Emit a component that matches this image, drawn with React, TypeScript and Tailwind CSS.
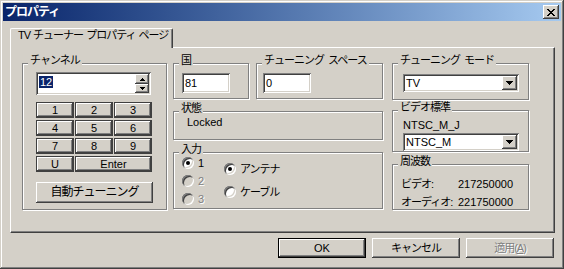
import React from "react";

const raised =
  "bg-[#d4d0c8] shadow-[inset_-1px_-1px_#404040,inset_1px_1px_#fff,inset_-2px_-2px_#808080]";
const sunken =
  "shadow-[inset_1px_1px_#808080,inset_-1px_-1px_#fff,inset_2px_2px_#404040,inset_-2px_-2px_#d4d0c8]";
const jp = "tracking-[-1px] [word-spacing:2px]";
const disabledText = "text-[#808080] [text-shadow:1px_1px_#fff]";

function DownArrow() {
  return (
    <svg width="7" height="4" viewBox="0 0 7 4" shapeRendering="crispEdges">
      <rect x="0" y="0" width="7" height="1" fill="#000" />
      <rect x="1" y="1" width="5" height="1" fill="#000" />
      <rect x="2" y="2" width="3" height="1" fill="#000" />
      <rect x="3" y="3" width="1" height="1" fill="#000" />
    </svg>
  );
}

function SmallArrow({ up }: { up?: boolean }) {
  return (
    <svg width="5" height="3" viewBox="0 0 5 3" shapeRendering="crispEdges">
      {up ? (
        <>
          <rect x="2" y="0" width="1" height="1" fill="#000" />
          <rect x="1" y="1" width="3" height="1" fill="#000" />
          <rect x="0" y="2" width="5" height="1" fill="#000" />
        </>
      ) : (
        <>
          <rect x="0" y="0" width="5" height="1" fill="#000" />
          <rect x="1" y="1" width="3" height="1" fill="#000" />
          <rect x="2" y="2" width="1" height="1" fill="#000" />
        </>
      )}
    </svg>
  );
}

function CloseGlyph() {
  const rows = [
    [0, 1, 6, 7],
    [1, 2, 5, 6],
    [2, 3, 4, 5],
    [3, 4],
    [2, 3, 4, 5],
    [1, 2, 5, 6],
    [0, 1, 6, 7],
  ];
  return (
    <svg width="8" height="7" viewBox="0 0 8 7" shapeRendering="crispEdges">
      {rows.map((xs, y) =>
        xs.map((x) => <rect key={`${x}-${y}`} x={x} y={y} width="1" height="1" fill="#000" />)
      )}
    </svg>
  );
}

function Group({
  label,
  className = "",
  children,
}: {
  label: string;
  className?: string;
  children?: React.ReactNode;
}) {
  return (
    <div
      className={`relative border border-[#808080] shadow-[inset_1px_1px_#fff,1px_1px_#fff] ${className}`}
    >
      <span className={`absolute left-[5px] top-[-10px] bg-[#d4d0c8] px-[2px] ${jp}`}>{label}</span>
      {children}
    </div>
  );
}

function Radio({
  label,
  checked,
  disabled,
  isJp,
}: {
  label: string;
  checked?: boolean;
  disabled?: boolean;
  isJp?: boolean;
}) {
  return (
    <div className="flex h-[18px] items-center">
      <span
        className={`flex h-3 w-3 items-center justify-center rounded-full ${
          disabled ? "bg-[#d4d0c8]" : "bg-white"
        } ${sunken}`}
      >
        {checked && <span className="h-1 w-1 rounded-full bg-black" />}
      </span>
      <span className={`ml-[4px] ${disabled ? disabledText : ""} ${isJp ? jp : ""}`}>{label}</span>
    </div>
  );
}

function Combo({ value }: { value: string }) {
  return (
    <div className={`flex h-[18px] w-[116px] items-center bg-white p-[2px] ${sunken}`}>
      <span className="flex-1 pl-[1px]">{value}</span>
      <span className={`flex h-[14px] w-[15px] items-center justify-center ${raised}`}>
        <DownArrow />
      </span>
    </div>
  );
}

const KEYS = ["1", "2", "3", "4", "5", "6", "7", "8", "9"];

export default function App() {
  return (
    <div className="h-[269px] w-[564px] overflow-hidden bg-[#d4d0c8] p-[3px] font-['Liberation_Sans','Noto_Sans_CJK_JP',sans-serif] text-[11px] leading-[13px] text-black shadow-[inset_-1px_-1px_#404040,inset_1px_1px_#d4d0c8,inset_-2px_-2px_#808080,inset_2px_2px_#fff]">
      {/* title bar */}
      <div className="flex h-[18px] items-center justify-between bg-linear-to-r from-[#0a246a] to-[#a6caf0] pl-[2px] pr-[2px]">
        <span className={`text-[12px] font-bold text-white ${jp}`}>プロパティ</span>
        <button className={`flex h-[14px] w-[16px] items-center justify-center ${raised}`}>
          <CloseGlyph />
        </button>
      </div>

      <div className="pl-[7px] pr-[6px] pt-[7px]">
        {/* tab */}
        <div className="relative z-10 -mb-px flex h-[20px] w-[163px] rounded-t-[2px] border-l border-t border-r border-l-white border-t-white border-r-[#404040] bg-[#d4d0c8] pl-[7px] shadow-[inset_-1px_0_#808080]">
          <span className="tracking-[-1px] [word-spacing:1px]">TV チューナー プロパティ ページ</span>
        </div>

        {/* panel */}
        <div className="flex h-[186px] gap-[6px] border-b border-l border-r border-t border-b-[#404040] border-l-white border-r-[#404040] border-t-white pl-[11px] pt-[15px] shadow-[inset_-1px_-1px_#808080]">
          {/* channel */}
          <Group label="チャンネル" className="h-[147px] w-[145px]">
            <div className="pl-[13px] pt-[8px]">
              <div className={`flex h-[23px] w-[115px] bg-white p-[2px] ${sunken}`}>
                <div className="flex-1 pl-[1px] pt-[2px]">
                  <span className="bg-[#0a246a] px-[1px] leading-[11px] text-white">12</span>
                </div>
                <div className="flex w-[14px] flex-col">
                  <span className={`flex h-[10px] items-center justify-center ${raised}`}>
                    <SmallArrow up />
                  </span>
                  <span className={`flex h-[9px] items-center justify-center ${raised}`}>
                    <SmallArrow />
                  </span>
                </div>
              </div>
              <div className="mt-[7px] grid w-[116px] grid-cols-3 gap-x-px gap-y-[2px]">
                {[...KEYS, "U"].map((k) => (
                  <button
                    key={k}
                    className={`flex h-[16px] items-center justify-center border border-[#404040] ${raised}`}
                  >
                    {k}
                  </button>
                ))}
                <button
                  className={`col-span-2 flex h-[16px] items-center justify-center border border-[#404040] ${raised}`}
                >
                  Enter
                </button>
              </div>
              <button
                className={`mt-[10px] flex h-[21px] w-[117px] items-center justify-center text-[12px] ${raised} ${jp}`}
              >
                自動チューニング
              </button>
            </div>
          </Group>

          {/* middle column */}
          <div className="flex w-[210px] flex-col">
            <div className="flex gap-[7px]">
              <Group label="国" className="h-[36px] w-[76px]">
                <div className="pl-[8px] pt-[9px]">
                  <div className={`flex h-[20px] w-[48px] items-center bg-white pl-[3px] ${sunken}`}>81</div>
                </div>
              </Group>
              <Group label="チューニング スペース" className="h-[36px] w-[127px]">
                <div className="pl-[6px] pt-[9px]">
                  <div className={`flex h-[20px] w-[48px] items-center bg-white pl-[3px] ${sunken}`}>0</div>
                </div>
              </Group>
            </div>
            <Group label="状態" className="mt-[12px] h-[29px] w-[210px]">
              <div className="pl-[13px] pt-[4px]">Locked</div>
            </Group>
            <Group label="入力" className="mt-[12px] h-[57px] w-[210px]">
              <div className="flex pl-[8px]">
                <div className="w-[42px] pt-[1px]">
                  <Radio label="1" checked />
                  <Radio label="2" disabled />
                  <Radio label="3" disabled />
                </div>
                <div className="flex flex-col gap-[5px] pt-[7px]">
                  <Radio label="アンテナ" checked isJp />
                  <Radio label="ケーブル" isJp />
                </div>
              </div>
            </Group>
          </div>

          {/* right column */}
          <div className="ml-[3px] flex w-[137px] flex-col">
            <Group label="チューニング モード" className="h-[37px] w-[137px]">
              <div className="pl-[10px] pt-[10px]">
                <Combo value="TV" />
              </div>
            </Group>
            <Group label="ビデオ標準" className="mt-[10px] h-[42px] w-[137px]">
              <div className="pl-[10px] pt-[8px]">
                <div>NTSC_M_J</div>
                <div className="mt-[1px]">
                  <Combo value="NTSC_M" />
                </div>
              </div>
            </Group>
            <Group label="周波数" className="mt-[12px] h-[46px] w-[137px]">
              <div className="grid grid-cols-[57px_1fr] pl-[8px] pt-[10px] leading-[18px]">
                <span className={jp}>ビデオ:</span>
                <span>217250000</span>
                <span className={jp}>オーディオ:</span>
                <span>221750000</span>
              </div>
            </Group>
          </div>
        </div>

        {/* dialog buttons */}
        <div className="mr-px mt-[5px] flex justify-end gap-[6px]">
          <button
            className={`flex h-[20px] w-[88px] items-center justify-center border border-black ${raised}`}
          >
            OK
          </button>
          <button className={`flex h-[20px] w-[88px] items-center justify-center ${raised} ${jp}`}>
            キャンセル
          </button>
          <button
            className={`flex h-[20px] w-[88px] items-center justify-center ${raised} ${jp} ${disabledText}`}
          >
            適用(<span className="underline">A</span>)
          </button>
        </div>
      </div>
    </div>
  );
}
